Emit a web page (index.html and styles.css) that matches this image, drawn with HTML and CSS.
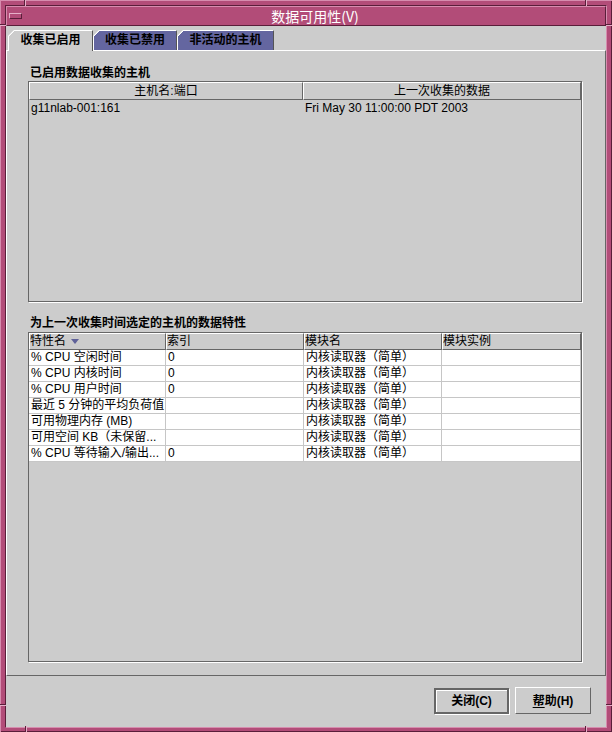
FILE: index.html
```html
<!DOCTYPE html>
<html lang="zh-CN">
<head>
<meta charset="utf-8">
<title>数据可用性</title>
<link rel="stylesheet" href="styles.css">
</head>
<body>
<div class="window">
  <div class="frame-inner">
    <div class="titlebar">
      <div class="menubtn"><span class="menubar"></span></div>
      <div class="title">数据可用性(V)</div>
    </div>
    <div class="client">
      <div class="tabs">
        <div class="tab active t-a">收集已启用</div>
        <div class="tab t-b">收集已禁用</div>
        <div class="tab t-c">非活动的主机</div>
      </div>
      <div class="panel">
        <div class="group-label first">已启用数据收集的主机</div>
        <div class="tbl tbl1">
          <div class="hrow cols1">
            <div class="hcell center">主机名:端口</div>
            <div class="hcell center">上一次收集的数据</div>
          </div>
          <div class="row1 cols1">
            <div class="c1">g11nlab-001:161</div>
            <div class="c1">Fri May 30 11:00:00 PDT 2003</div>
          </div>
        </div>
        <div class="group-label second">为上一次收集时间选定的主机的数据特性</div>
        <div class="tbl tbl2">
          <div class="hrow cols2">
            <div class="hcell left">特性名 <svg class="sort" width="8" height="5" viewBox="0 0 8 5"><polygon points="0,0 8,0 4,5" fill="#5f6199"/></svg></div>
            <div class="hcell left">索引</div>
            <div class="hcell left">模块名</div>
            <div class="hcell left">模块实例</div>
          </div>
          <div class="row cols2"><div class="cell">% CPU 空闲时间</div><div class="cell">0</div><div class="cell">内核读取器（简单）</div><div class="cell"></div></div>
          <div class="row cols2"><div class="cell">% CPU 内核时间</div><div class="cell">0</div><div class="cell">内核读取器（简单）</div><div class="cell"></div></div>
          <div class="row cols2"><div class="cell">% CPU 用户时间</div><div class="cell">0</div><div class="cell">内核读取器（简单）</div><div class="cell"></div></div>
          <div class="row cols2"><div class="cell">最近 5 分钟的平均负荷值</div><div class="cell"></div><div class="cell">内核读取器（简单）</div><div class="cell"></div></div>
          <div class="row cols2"><div class="cell">可用物理内存 (MB)</div><div class="cell"></div><div class="cell">内核读取器（简单）</div><div class="cell"></div></div>
          <div class="row cols2"><div class="cell">可用空间 KB（未保留...</div><div class="cell"></div><div class="cell">内核读取器（简单）</div><div class="cell"></div></div>
          <div class="row cols2"><div class="cell">% CPU 等待输入/输出...</div><div class="cell">0</div><div class="cell">内核读取器（简单）</div><div class="cell"></div></div>
        </div>
      </div>
      <div class="btnbar">
        <button class="btn btn-default">关闭(C)</button>
        <button class="btn btn-normal"><span class="mn">帮</span>助(H)</button>
      </div>
    </div>
  </div>
  <span class="mark v tl"></span>
  <span class="mark h tl2"></span>
  <span class="mark v tr"></span>
  <span class="mark h tr2"></span>
  <span class="mark h bl"></span>
  <span class="mark v bl2"></span>
  <span class="mark h br"></span>
  <span class="mark v br2"></span>
</div>
</body>
</html>
```

FILE: styles.css
```css
* { box-sizing: border-box; }
html, body { margin: 0; padding: 0; }
body {
  background: #b24c78;
  font-family: "Liberation Sans", "Noto Sans CJK SC", sans-serif;
  font-size: 12px;
  color: #000;
}
.window {
  position: relative;
  width: 612px;
  height: 732px;
  background: #b24c78;
  padding: 5px 5px 4px 5px;
  box-shadow: inset 1px 1px 0 #d68cae, inset -1px -1px 0 #5a1e3a;
}
.frame-inner {
  height: 100%;
  display: flex;
  flex-direction: column;
  border: 1px solid;
  border-color: #5a1e3a #d68cae #d68cae #5a1e3a;
}
.titlebar {
  height: 20px;
  flex: none;
  display: flex;
  align-items: flex-start;
  background: #b24c78;
  border: 1px solid;
  border-color: #d68cae #5a1e3a #5a1e3a #d68cae;
}
.menubtn { width: 18px; height: 18px; flex: none; }
.menubar {
  display: block;
  width: 13px;
  height: 6px;
  margin: 6px 0 0 2px;
  border: 1px solid;
  border-color: #e6b0c9 #5a1e3a #5a1e3a #e6b0c9;
}
.title {
  flex: 1;
  text-align: center;
  color: #fff;
  font-family: "Noto Sans CJK SC", sans-serif;
  font-size: 14px;
  line-height: 18px;
}
.client {
  flex: 1;
  background: #cccccc;
  display: flex;
  flex-direction: column;
}
.tabs {
  height: 24px;
  flex: none;
  display: flex;
  align-items: flex-end;
  padding: 4px 0 0 2px;
}
.tab {
  --bg: #6466a0;
  height: 20px;
  border-top: 1px solid #fff;
  border-left: 1px solid #fff;
  border-right: 1px solid #555;
  font-family: "Noto Sans CJK SC", sans-serif;
  font-weight: bold;
  font-size: 12px;
  line-height: 16px;
  text-align: center;
  background: linear-gradient(135deg, transparent 4.2px, #fff 4.2px, #fff 5.4px, var(--bg) 5.4px);
  background-origin: border-box;
  clip-path: polygon(6px 0, 100% 0, 100% 100%, 0 100%, 0 6px);
}
.tab.active {
  --bg: #cccccc;
  height: 21px;
  margin-bottom: -1px;
  position: relative;
  z-index: 1;
}
.t-a { width: 85px; }
.t-b { width: 84px; }
.t-c { width: 97px; }
.panel {
  height: 626px;
  flex: none;
  border: 1px solid;
  border-color: #fff #666 #666 #fff;
  padding: 0 23px 0 21px;
}
.group-label {
  font-family: "Noto Sans CJK SC", sans-serif;
  font-weight: bold;
  font-size: 12px;
  line-height: 16px;
  padding-left: 2px;
}
.group-label.first { margin-top: 13px; margin-bottom: 1px; }
.group-label.second { margin-top: 12px; margin-bottom: 2px; }
.tbl {
  width: 554px;
  border: 1px solid #666;
  box-shadow: 1px 1px 0 #fff;
}
.tbl1 { height: 221px; }
.tbl2 { height: 330px; }
.cols1 { display: grid; grid-template-columns: 274px 278px; }
.cols2 { display: grid; grid-template-columns: 137px 138px 138px 139px; }
.hcell {
  background: #cccccc;
  border-top: 1px solid #fff;
  border-left: 1px solid #fff;
  border-right: 1px solid #666;
  border-bottom: 1px solid #666;
  white-space: nowrap;
  overflow: hidden;
}
.tbl1 .hcell { height: 18px; line-height: 16px; }
.tbl2 .hcell { height: 17px; line-height: 15px; }
.hcell.center { text-align: center; }
.hcell.left { padding-left: 0; }
.sort { vertical-align: 1px; margin-left: 2px; }
.c1 { height: 16px; line-height: 16px; padding-left: 2px; white-space: nowrap; }
.cell {
  height: 16px;
  line-height: 15px;
  background: #fff;
  border-right: 1px solid #c6c6c6;
  border-bottom: 1px solid #c6c6c6;
  padding-left: 2px;
  white-space: nowrap;
  overflow: hidden;
}
.btnbar {
  flex: 1;
  display: flex;
  justify-content: flex-end;
  align-items: flex-start;
  gap: 6px;
  padding: 11px 15px 0 0;
}
.btn {
  font-family: "Liberation Sans", "Noto Sans CJK SC", sans-serif;
  font-weight: bold;
  font-size: 12px;
  color: #000;
  background: #cccccc;
  padding: 0;
  margin: 0;
  line-height: 16px;
}
.btn-default {
  width: 75px;
  height: 26px;
  margin-top: 1px;
  border: 2px solid #666;
  box-shadow: 1px 1px 0 #fff, inset 1px 1px 0 #fff;
}
.btn-normal {
  width: 76px;
  height: 27px;
  border: 1px solid;
  border-color: #fff #666 #666 #fff;
}
.mn { text-decoration: underline; text-underline-offset: 2px; }
.mark { position: absolute; display: block; }
.mark.v { width: 2px; height: 6px; border-left: 1px solid #5a1e3a; border-right: 1px solid #e6b0c9; }
.mark.h { width: 6px; height: 2px; border-top: 1px solid #5a1e3a; border-bottom: 1px solid #e6b0c9; }
.tl { left: 24px; top: 0; }
.tl2 { left: 0; top: 24px; }
.tr { left: 585px; top: 0; }
.tr2 { left: 606px; top: 24px; }
.bl { left: 0; top: 704px; }
.bl2 { left: 25px; top: 726px; }
.br { left: 606px; top: 704px; }
.br2 { left: 585px; top: 726px; }
```
